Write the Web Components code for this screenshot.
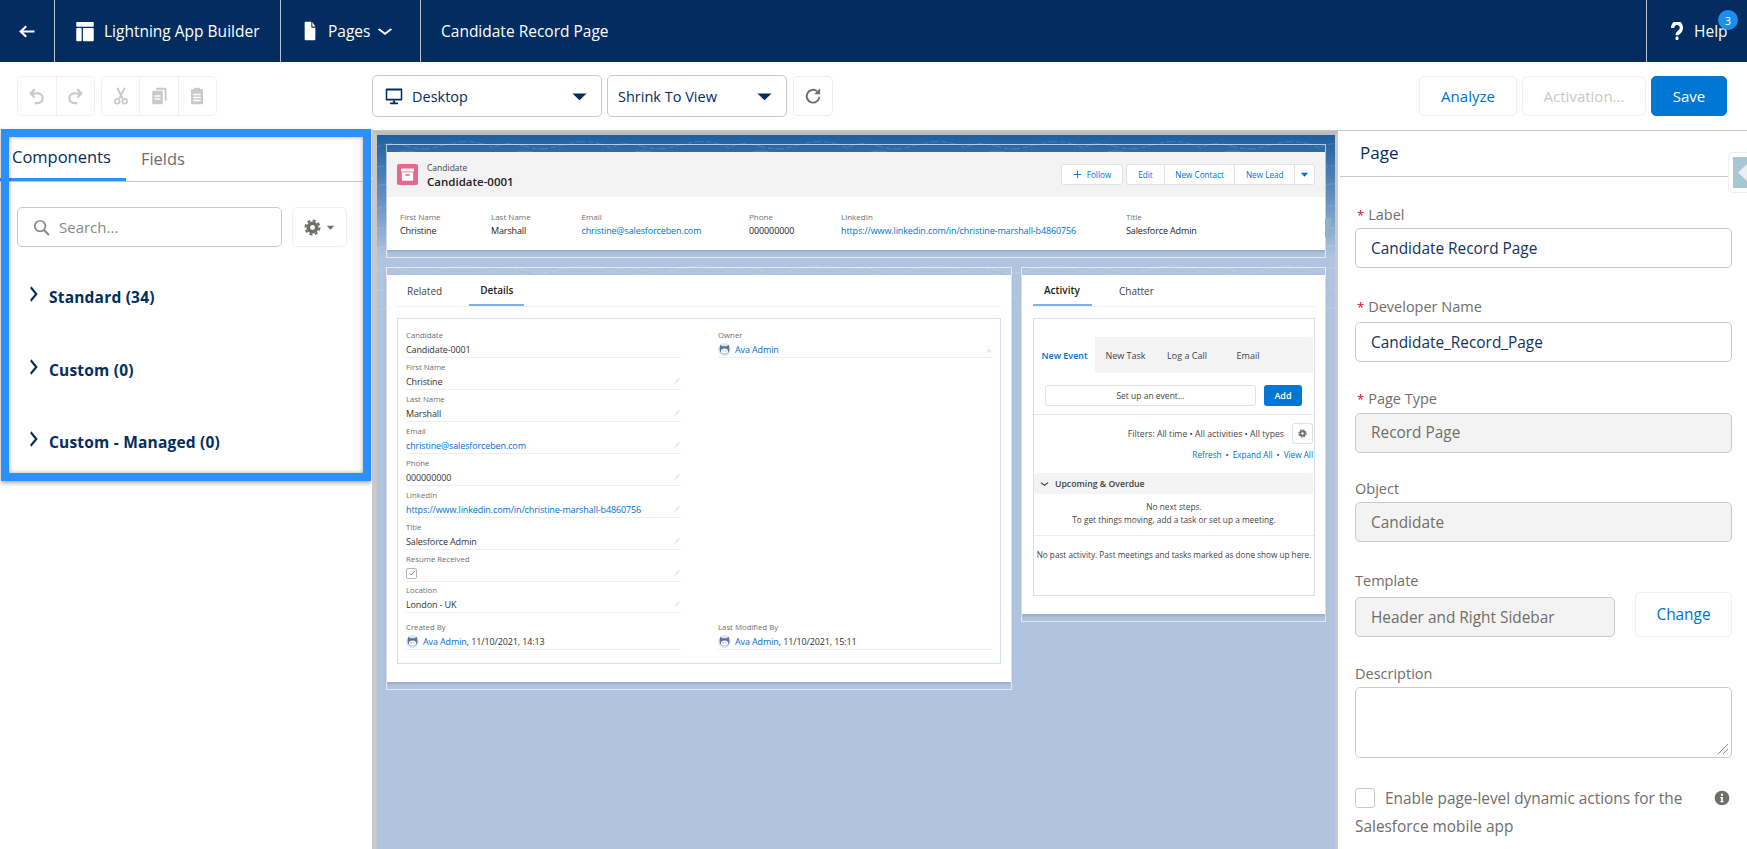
<!DOCTYPE html>
<html lang="en">
<head>
<meta charset="utf-8">
<title>Lightning App Builder</title>
<style>
  html, body { margin: 0; height: 849px; overflow: hidden; background: #fff; }
  body { font-family: "Open Sans", "Noto Sans", "Liberation Sans", sans-serif; display: flex; flex-direction: column; }
</style>
</head>
<body>
<sf-topbar></sf-topbar>
<sf-toolbar></sf-toolbar>
<sf-workspace>
  <sf-palette slot="left"></sf-palette>
  <sf-canvas slot="center">
    <sf-highlights></sf-highlights>
    <sf-details slot="main"></sf-details>
    <sf-activity slot="side"></sf-activity>
  </sf-canvas>
  <sf-props slot="right"></sf-props>
</sf-workspace>

<script>
"use strict";
const ICONS = {
  back: '<path d="M22 12H4M11 4.500L3.500 12l7.500 7.500" fill="none" stroke="currentColor" stroke-width="2.800"/>',
  layout: '<rect x="1.500" y="1" width="21" height="5.500" rx="1"/><rect x="1.500" y="8" width="6.500" height="15" rx="1"/><rect x="9.500" y="8" width="13" height="15" rx="1"/>',
  file: '<path fill-rule="evenodd" d="M5 1h9v6a1 1 0 0 0 1 1h5v14a1 1 0 0 1-1 1H5a1 1 0 0 1-1-1V2a1 1 0 0 1 1-1zM15.500 1.200L20 6.500h-4.500z"/>',
  chevdown: '<path d="M2.500 6.500l9.500 10.500 9.500-10.500" fill="none" stroke="currentColor" stroke-width="3.400"/>',
  chevright: '<path d="M6 2l12 10L6 22" fill="none" stroke="currentColor" stroke-width="4"/>',
  help: '<path d="M4.500 8a7.500 6.500 0 1 1 11.500 5.200c-2.200 1.500-4 2.200-4 4.300" fill="none" stroke="currentColor" stroke-width="5.600"/><circle cx="12" cy="21.600" r="2.600"/>',
  monitor: '<path fill-rule="evenodd" d="M2 2h20a1 1 0 0 1 1 1v14a1 1 0 0 1-1 1H2a1 1 0 0 1-1-1V3a1 1 0 0 1 1-1zm1 2.500V15.500h18V4.500z"/><rect x="10.500" y="18" width="3" height="3"/><rect x="6.500" y="20.500" width="11" height="2.500" rx="1"/>',
  undo: '<path d="M9 3L3.500 8.500 9 14M4 8.500h9a6.500 6.500 0 0 1 0 13H9" fill="none" stroke="currentColor" stroke-width="2.800"/>',
  redo: '<path d="M15 3l5.500 5.500L15 14M20 8.500h-9a6.500 6.500 0 0 0 0 13h4" fill="none" stroke="currentColor" stroke-width="2.800"/>',
  cut: '<path d="M7 1l7.500 15M17 1L9.500 16" fill="none" stroke="currentColor" stroke-width="2.400"/><circle cx="7" cy="19" r="3.200" fill="none" stroke="currentColor" stroke-width="2.200"/><circle cx="17" cy="19" r="3.200" fill="none" stroke="currentColor" stroke-width="2.200"/>',
  copy: '<path d="M8 1h13a1 1 0 0 1 1 1v16h-2.500V3.500H8z"/><path fill-rule="evenodd" d="M4 5h12a1 1 0 0 1 1 1v16a1 1 0 0 1-1 1H4a1 1 0 0 1-1-1V6a1 1 0 0 1 1-1zm2 6v2h8v-2zm0 4v2h8v-2z"/>',
  clip: '<path fill-rule="evenodd" d="M9 1h6a1 1 0 0 1 1 1v1h3a1 1 0 0 1 1 1v18a1 1 0 0 1-1 1H5a1 1 0 0 1-1-1V4a1 1 0 0 1 1-1h3V2a1 1 0 0 1 1-1zM7 9v2h10V9zm0 4v2h10v-2zm0 4v2h10v-2z"/>',
  refresh: '<path d="M20.500 13a8.500 8.500 0 1 1-3-7.200" fill="none" stroke="currentColor" stroke-width="2.600"/><path d="M21.500 1.500v8h-8z"/>',
  caret: '<path d="M2 7h20L12 18z"/>',
  search: '<circle cx="10" cy="10" r="7.500" fill="none" stroke="currentColor" stroke-width="2.400"/><path d="M15.500 15.500L22.500 22.500" stroke="currentColor" stroke-width="2.800"/>',
  gear: '<circle cx="12" cy="12" r="9.800" fill="none" stroke="currentColor" stroke-width="3" stroke-dasharray="4.200 3.500"/><path fill-rule="evenodd" d="M12 3.500a8.500 8.500 0 1 1 0 17 8.500 8.500 0 0 1 0-17zm0 5a3.500 3.500 0 1 0 0 7 3.500 3.500 0 0 0 0-7z"/>',
  box: '<rect width="24" height="24" rx="2" fill="#e3698c"/><rect x="4.500" y="5" width="15" height="3.500" rx=".6" fill="#fff"/><path fill-rule="evenodd" d="M5.500 9.500h13V18a1 1 0 0 1-1 1h-11a1 1 0 0 1-1-1zm4 2.300v1.700h5v-1.700z" fill="#fff"/>',
  plus: '<path d="M12 2v20M2 12h20" stroke="currentColor" stroke-width="2.400"/>',
  pencil: '<path d="M3 21l3-7L17 3l4 4-11 11z"/>',
  lock: '<path d="M6 13h12v9H6z"/><path d="M9 13V7a4 4 0 0 1 8 0" fill="none" stroke="currentColor" stroke-width="2"/>',
  check: '<path d="M5 13l5 5L20 6" fill="none" stroke="currentColor" stroke-width="2.400"/>',
  info: '<path fill-rule="evenodd" d="M12 1a11 11 0 1 1 0 22 11 11 0 0 1 0-22zM10.500 5.500v3h3v-3zM9.500 10.500v2h1.200v4H9.500v2h5v-2h-1.200v-6z"/>',
  avatar: '<circle cx="12" cy="12" r="12" fill="#dfe6f0"/><path d="M4 3l4 3h8l4-3 1 9a9 9 0 0 1-18 0z" fill="#5b7396"/><ellipse cx="12" cy="15" rx="6.500" ry="5" fill="#fff"/><circle cx="9.500" cy="14.500" r="1" fill="#5b7396"/><circle cx="14.500" cy="14.500" r="1" fill="#5b7396"/>'
};

class SfIcon extends HTMLElement {
  connectedCallback() {
    const w = this.getAttribute("w") || this.getAttribute("size") || 16;
    const h = this.getAttribute("h") || this.getAttribute("size") || 16;
    this.attachShadow({ mode: "open" }).innerHTML = `
      <style>:host { display: inline-flex; flex: none; } svg { display: block; fill: currentColor; }</style>
      <svg width="${w}" height="${h}" viewBox="0 0 24 24" preserveAspectRatio="none">${ICONS[this.getAttribute("name")]}</svg>`;
  }
}
customElements.define("sf-icon", SfIcon);

class SfTopbar extends HTMLElement {
  constructor() {
    super();
    this.attachShadow({ mode: "open" }).innerHTML = `
    <style>
      :host { display: flex; flex: none; height: 62px; background: #032d60; color: #fff; font-size: 15.500px; }
      .cell { display: flex; align-items: center; border-right: 1px solid #b9c2d0; box-sizing: border-box; }
      .back { width: 55px; padding-left: 18px; }
      .app { width: 226px; padding-left: 20px; gap: 9px; }
      .pages { width: 140px; padding-left: 21px; gap: 10px; }
      .pages sf-icon:last-child { margin-left: -3px; }
      .name { flex: 1; padding-left: 20px; border-right: 0; }
      .help { width: 101px; padding-left: 23px; gap: 10px; border-right: 0; border-left: 1px solid #b9c2d0; position: relative; }
      .badge { position: absolute; left: 71px; top: 10px; width: 20px; height: 20px; border-radius: 50%; background: #1b8ff0; font-size: 11px; display: flex; align-items: center; justify-content: center; }
    </style>
    <div class="cell back"><sf-icon name="back" w="18" h="17"></sf-icon></div>
    <div class="cell app"><sf-icon name="layout" w="20" h="21"></sf-icon><span>Lightning App Builder</span></div>
    <div class="cell pages"><sf-icon name="file" w="16" h="20"></sf-icon><span>Pages</span><sf-icon name="chevdown" w="16" h="11"></sf-icon></div>
    <div class="cell name">Candidate Record Page</div>
    <div class="cell help"><sf-icon name="help" w="14" h="18"></sf-icon><span>Help</span><span class="badge">3</span></div>`;
  }
}
customElements.define("sf-topbar", SfTopbar);

class SfToolbar extends HTMLElement {
  constructor() {
    super();
    this.attachShadow({ mode: "open" }).innerHTML = `
    <style>
      :host { display: flex; flex: none; height: 68px; align-items: center; box-sizing: border-box; padding: 0 20px 0 17px; font-size: 14.500px; color: #032d60; }
      .grp { display: flex; height: 40px; border: 1px solid #f0f0f0; border-radius: 5px; box-sizing: border-box; color: #c9c9c9; }
      .grp span { flex: 1; display: flex; align-items: center; justify-content: center; }
      .grp span + span { border-left: 1px solid #f0f0f0; }
      .g1 { width: 78px; margin-right: 6px; }
      .g2 { width: 116px; margin-right: 155px; }
      .dd { display: flex; align-items: center; height: 42px; box-sizing: border-box; border: 1px solid #c9c9c9; border-radius: 5px; margin-right: 6px; padding: 0 13px 0 12px; }
      .dd span { flex: 1; }
      .d1 { width: 230px; margin-right: 5px; }
      .d1 span { margin-left: 9px; }
      .d2 { width: 180px; padding-left: 10px; }
      .icon { width: 40px; height: 40px; box-sizing: border-box; border: 1px solid #ececec; border-radius: 5px; display: flex; align-items: center; justify-content: center; color: #706e6b; }
      .sp { flex: 1; }
      .btn { height: 40px; box-sizing: border-box; display: flex; align-items: center; justify-content: center; border: 1px solid #f0f0f0; border-radius: 5px; color: #0070d2; margin-left: 5px; }
      .an { width: 98px; font-size: 15px; }
      .ac { width: 124px; color: #c9c7c5; font-size: 15px; }
      .sv { width: 76px; background: #0176d3; border-color: #0176d3; color: #fff; font-size: 15px; }
    </style>
    <div class="grp g1"><span><sf-icon name="undo" size="18"></sf-icon></span><span><sf-icon name="redo" size="18"></sf-icon></span></div>
    <div class="grp g2"><span><sf-icon name="cut" size="18"></sf-icon></span><span><sf-icon name="copy" size="18"></sf-icon></span><span><sf-icon name="clip" size="18"></sf-icon></span></div>
    <div class="dd d1"><sf-icon name="monitor" size="18"></sf-icon><span>Desktop</span><sf-icon name="caret" w="17" h="15"></sf-icon></div>
    <div class="dd d2"><span>Shrink To View</span><sf-icon name="caret" w="17" h="15"></sf-icon></div>
    <div class="icon"><sf-icon name="refresh" size="18"></sf-icon></div>
    <div class="sp"></div>
    <div class="btn an">Analyze</div>
    <div class="btn ac">Activation...</div>
    <div class="btn sv">Save</div>`;
  }
}
customElements.define("sf-toolbar", SfToolbar);

class SfWorkspace extends HTMLElement {
  constructor() {
    super();
    this.attachShadow({ mode: "open" }).innerHTML = `
    <style>
      :host { display: flex; flex: 1; min-height: 0; border-top: 1px solid #c9c9c9; }
    </style>
    <slot name="left"></slot><slot name="center"></slot><slot name="right"></slot>`;
  }
}
customElements.define("sf-workspace", SfWorkspace);

class SfPalette extends HTMLElement {
  constructor() {
    super();
    this.attachShadow({ mode: "open" }).innerHTML = `
    <style>
      :host { display: block; flex: none; width: 372px; position: relative; color: #032d60; }
      .tabs { display: flex; height: 50px; border-bottom: 1px solid #c9c9c9; font-size: 16.500px; }
      .tab { display: flex; align-items: center; padding: 4px 15px 0 12px; height: 50px; box-sizing: border-box; margin-bottom: -1px; }
      .on { border-bottom: 3px solid #2b91f9; }
      .off { color: #706e6b; margin-left: 3px; }
      .search { display: flex; margin: 25px 0 14px 17px; }
      .box { width: 265px; height: 40px; box-sizing: border-box; border: 1px solid #c9c9c9; border-radius: 5px; display: flex; align-items: center; gap: 9px; padding-left: 15px; color: #8a8886; font-size: 15px; }
      .gear { width: 55px; height: 40px; box-sizing: border-box; margin-left: 10px; border: 1px solid #f0f0f0; border-radius: 5px; display: flex; align-items: center; justify-content: center; gap: 5px; color: #706e6b; }
      .sec { display: flex; align-items: center; gap: 10px; height: 72.500px; padding-left: 28px; font-weight: 700; font-size: 15.500px; letter-spacing: .2px; }
      .sec sf-icon { margin-top: -6px; }
      .mark { position: absolute; left: 1px; top: -2px; width: 370px; height: 352px; box-sizing: border-box; border: 8px solid #2b91f9; pointer-events: none; box-shadow: 0 2px 4px rgba(0,0,0,.35), inset 0 0 4px rgba(0,0,0,.35); }
    </style>
    <div class="tabs"><div class="tab on">Components</div><div class="tab off">Fields</div></div>
    <div class="search">
      <div class="box"><sf-icon name="search" size="17"></sf-icon><span>Search...</span></div>
      <div class="gear"><sf-icon name="gear" size="17"></sf-icon><sf-icon name="caret" w="9" h="9"></sf-icon></div>
    </div>
    <div class="sec"><sf-icon name="chevright" w="11" h="16"></sf-icon><span>Standard (34)</span></div>
    <div class="sec"><sf-icon name="chevright" w="11" h="16"></sf-icon><span>Custom (0)</span></div>
    <div class="sec"><sf-icon name="chevright" w="11" h="16"></sf-icon><span>Custom - Managed (0)</span></div>
    <div class="mark"></div>`;
  }
}
customElements.define("sf-palette", SfPalette);

class SfCanvas extends HTMLElement {
  constructor() {
    super();
    this.attachShadow({ mode: "open" }).innerHTML = `
    <style>
      :host { display: block; flex: 1; min-width: 0; position: relative; overflow: hidden; box-sizing: border-box; border-left: 5px solid #c9c9c9; border-right: 3px solid #c9c9c9; border-top: 4px solid #bdbdbd; padding: 9px 9px 0; background: linear-gradient(#1c5f9f 0, #6f95c6 70px, #b0c4df 122px); }
      .topo { position: absolute; left: 0; top: 0; width: 100%; height: 175px; }
      .row { position: relative; display: flex; gap: 9px; margin-top: 9px; align-items: flex-start; }
      .zone { position: relative; display: block; }
      ::slotted(sf-details) { width: 626px; }
      ::slotted(sf-activity) { width: 305px; }
    </style>
    <svg class="topo" aria-hidden="true">
      <defs><pattern id="p" width="118" height="62" patternUnits="userSpaceOnUse">
        <g fill="none" stroke="#fff" stroke-opacity=".2" stroke-width=".8">
          <path d="M0 12c20-10 34 6 55 1s38-12 63 1" stroke-dasharray="5 2 9 3"/>
          <path d="M0 32c26-6 40 14 66 4s32-10 52-3" stroke-dasharray="7 2"/>
          <path d="M0 52c16-9 42 5 58-3s40-5 60 3"/>
          <ellipse cx="30" cy="22" rx="14" ry="6"/><ellipse cx="88" cy="44" rx="17" ry="7" stroke-dasharray="3 2"/><ellipse cx="88" cy="44" rx="8" ry="3"/>
        </g></pattern></defs>
      <rect width="100%" height="100%" fill="url(#p)"/>
    </svg>
    <div class="zone"><slot></slot></div>
    <div class="row"><slot name="main"></slot><slot name="side"></slot></div>`;
  }
}
customElements.define("sf-canvas", SfCanvas);

const ZONE = `border: 1px solid rgba(255,255,255,.65); padding: 7px 0; box-sizing: border-box;`;
const TAB_CSS = `
  .tabs { display: flex; gap: 16px; height: 31px; border-bottom: 1px solid #f3f3f3; font-size: 10px; color: #444; }
  .tab { display: flex; align-items: center; padding: 0 11px; box-sizing: border-box; height: 31px; margin-bottom: -1px; }
  .on { font-weight: 600; color: #222; border-bottom: 2px solid #7fb0ec; }`;

class SfHighlights extends HTMLElement {
  constructor() {
    super();
    this.attachShadow({ mode: "open" }).innerHTML = `
    <style>
      :host { display: block; position: relative; ${ZONE} color: #222; }
      .card { box-shadow: 0 1px 2px rgba(0,0,0,.15); }
      .head { height: 45px; background: #f3f3f3; display: flex; align-items: center; padding: 0 10px; box-sizing: border-box; gap: 9px; }
      .ttl { flex: 1; line-height: 13px; }
      .ttl small { display: block; font-size: 8.500px; color: #444; }
      .ttl b { font-size: 11.500px; font-weight: 600; }
      .b { height: 21px; background: #fff; border: 1px solid #e1e1e1; border-radius: 3px; box-sizing: border-box; display: flex; font-size: 8.200px; color: #0070d2; align-items: center; }
      .b > span { display: flex; align-items: center; justify-content: center; height: 100%; box-sizing: border-box; }
      .b > span + span { border-left: 1px solid #e1e1e1; }
      .follow { width: 62px; gap: 5px; justify-content: center; margin-right: -6px; }
      .grp { width: 189px; }
      .body { height: 53px; background: #fff; display: flex; align-items: flex-start; padding-top: 13px; box-sizing: border-box; padding-left: 13px; font-size: 9px; letter-spacing: -.12px; }
      .f { line-height: 14px; }
      .f small { display: block; font-size: 8px; color: #706e6b; letter-spacing: 0; }
      a { color: #0070d2; text-decoration: none; }
      .handle { position: absolute; right: -6px; top: 73px; width: 6px; height: 20px; background: #8fb0c8; border-radius: 2px 0 0 2px; }
    </style>
    <div class="card">
      <div class="head">
        <sf-icon name="box" size="21"></sf-icon>
        <div class="ttl"><small>Candidate</small><b>Candidate-0001</b></div>
        <div class="b follow"><sf-icon name="plus" size="9"></sf-icon>Follow</div>
        <div class="b grp"><span style="width:37px">Edit</span><span style="width:71px">New Contact</span><span style="width:60px">New Lead</span><span style="width:20px"><sf-icon name="caret" size="9"></sf-icon></span></div>
      </div>
      <div class="body">
        <div class="f" style="width:91px"><small>First Name</small>Christine</div>
        <div class="f" style="width:90.500px"><small>Last Name</small>Marshall</div>
        <div class="f" style="width:167.500px"><small>Email</small><a>christine@salesforceben.com</a></div>
        <div class="f" style="width:92px"><small>Phone</small>000000000</div>
        <div class="f" style="width:285px"><small>LinkedIn</small><a>https://www.linkedin.com/in/christine-marshall-b4860756</a></div>
        <div class="f"><small>Title</small>Salesforce Admin</div>
      </div>
    </div>
    <div class="handle"></div>`;
  }
}
customElements.define("sf-highlights", SfHighlights);

class SfField extends HTMLElement {
  connectedCallback() {
    const end = this.getAttribute("end");
    this.attachShadow({ mode: "open" }).innerHTML = `
    <style>
      :host { display: block; height: 32px; font-size: 9px; letter-spacing: -.12px; color: #333; }
      .l { height: 12px; line-height: 12px; font-size: 7.800px; color: #706e6b; letter-spacing: 0; }
      .v { height: 17px; box-sizing: border-box; display: flex; align-items: center; border-bottom: 1px solid #eeeeee; gap: 4px; }
      .v span { flex: 1; display: flex; align-items: center; white-space: pre; }
      sf-icon { color: #e8e8e8; }
    </style>
    <div class="l">${this.getAttribute("label")}</div>
    <div class="v"><span><slot></slot></span>${end ? `<sf-icon name="${end}" size="8"></sf-icon>` : ""}</div>`;
  }
}
customElements.define("sf-field", SfField);

class SfDetails extends HTMLElement {
  constructor() {
    super();
    this.attachShadow({ mode: "open" }).innerHTML = `
    <style>
      :host { display: block; ${ZONE} }
      .card { background: #fff; padding: 0 10px 19px 10px; box-shadow: 0 2px 3px rgba(0,0,0,.12); height: 407px; box-sizing: border-box; }
      ${TAB_CSS}
      .tabs { margin-left: -1px; }
      .box { margin-top: 11px; height: 346px; box-sizing: border-box; border: 1px solid #d5dfec; padding: 10px 8px; display: grid; grid-template-columns: 275px 275px; column-gap: 37px; grid-template-rows: repeat(7, 32px) 31px 32px 32px; }
      .foot { margin-top: 5px; }
      .c2 { grid-column: 2; grid-row: 1; }
      .chk { display: inline-flex; width: 9px; height: 9px; border: 1px solid #b5b5b5; border-radius: 2px; align-items: center; justify-content: center; }
      .who { margin-right: 4px; }
      a { color: #0070d2; }
    </style>
    <div class="card">
      <div class="tabs"><div class="tab">Related</div><div class="tab on">Details</div></div>
      <div class="box">
        <sf-field label="Candidate" style="grid-row:1">Candidate-0001</sf-field>
        <sf-field label="Owner" end="lock" class="c2"><sf-icon class="who" name="avatar" size="13"></sf-icon><a>Ava Admin</a></sf-field>
        <sf-field label="First Name" end="pencil" style="grid-row:2">Christine</sf-field>
        <sf-field label="Last Name" end="pencil" style="grid-row:3">Marshall</sf-field>
        <sf-field label="Email" end="pencil" style="grid-row:4"><a>christine@salesforceben.com</a></sf-field>
        <sf-field label="Phone" end="pencil" style="grid-row:5">000000000</sf-field>
        <sf-field label="LinkedIn" end="pencil" style="grid-row:6"><a>https://www.linkedin.com/in/christine-marshall-b4860756</a></sf-field>
        <sf-field label="Title" end="pencil" style="grid-row:7">Salesforce Admin</sf-field>
        <sf-field label="Resume Received" end="pencil" style="grid-row:8"><span class="chk"><sf-icon name="check" size="8" style="color:#706e6b"></sf-icon></span></sf-field>
        <sf-field label="Location" end="pencil" style="grid-row:9">London - UK</sf-field>
        <sf-field label="Created By" class="foot" style="grid-row:10"><sf-icon class="who" name="avatar" size="13"></sf-icon><a>Ava Admin</a>, 11/10/2021, 14:13</sf-field>
        <sf-field label="Last Modified By" class="foot" style="grid-row:10;grid-column:2"><sf-icon class="who" name="avatar" size="13"></sf-icon><a>Ava Admin</a>, 11/10/2021, 15:11</sf-field>
      </div>
    </div>`;
  }
}
customElements.define("sf-details", SfDetails);

class SfActivity extends HTMLElement {
  constructor() {
    super();
    this.attachShadow({ mode: "open" }).innerHTML = `
    <style>
      :host { display: block; ${ZONE} }
      .card { background: #fff; padding: 0 10px 0 11px; height: 339px; box-sizing: border-box; box-shadow: 0 2px 3px rgba(0,0,0,.12); font-size: 9px; color: #444; }
      ${TAB_CSS}
      .box { margin-top: 11px; height: 278px; box-sizing: border-box; border: 1px solid #d5dfec; padding-top: 18px; }
      .pub { display: flex; height: 36px; background: #f3f3f3; border-radius: 3px 3px 0 0; align-items: center; margin-right: 1px; }
      .pub span { text-align: center; }
      .pub .act { align-self: stretch; display: flex; align-items: center; justify-content: center; background: #fff; color: #0070d2; font-weight: 600; width: 61px; }
      .comp { display: flex; height: 42px; border-bottom: 1px solid #e5e5e5; padding: 12px 11px 0; box-sizing: border-box; gap: 8px; margin-right: 1px; }
      .inp { width: 211px; height: 21px; box-sizing: border-box; border: 1px solid #e1e1e1; border-radius: 3px; display: flex; align-items: center; justify-content: center; font-size: 8.500px; }
      .add { width: 38px; height: 21px; background: #0176d3; color: #fff; border-radius: 3px; display: flex; align-items: center; justify-content: center; font-weight: 600; }
      .flt { display: flex; justify-content: flex-end; align-items: center; height: 29px; margin-top: 4px; gap: 8px; padding-right: 1px; font-size: 8.700px; }
      .gb { width: 21px; height: 21px; box-sizing: border-box; border: 1px solid #e1e1e1; border-radius: 3px; display: flex; align-items: center; justify-content: center; color: #706e6b; }
      .lnk { display: flex; justify-content: flex-end; gap: 4px; height: 14px; line-height: 14px; font-size: 8.200px; margin-bottom: 11px; padding-right: 1px; color: #0070d2; }
      .lnk i { color: #444; font-style: normal; }
      .up { height: 21px; background: #f3f3f3; display: flex; align-items: center; gap: 6px; padding-left: 6px; font-weight: 600; font-size: 8.700px; margin-right: 1px; border-radius: 3px; }
      .none { text-align: center; line-height: 13px; padding: 6px 0 9px; border-bottom: 1px solid #ececec; font-size: 8.300px; }
      .past { text-align: center; margin-top: 13px; font-size: 8.200px; white-space: nowrap; }
    </style>
    <div class="card">
      <div class="tabs"><div class="tab on" style="width:59px">Activity</div><div class="tab">Chatter</div></div>
      <div class="box">
        <div class="pub"><span class="act">New Event</span><span style="width:61px">New Task</span><span style="width:62px">Log a Call</span><span style="width:60px">Email</span></div>
        <div class="comp"><div class="inp">Set up an event...</div><div class="add">Add</div></div>
        <div class="flt"><span>Filters: All time • All activities • All types</span><div class="gb"><sf-icon name="gear" size="9"></sf-icon></div></div>
        <div class="lnk"><span>Refresh</span><i>•</i><span>Expand All</span><i>•</i><span>View All</span></div>
        <div class="up"><sf-icon name="chevdown" w="9" h="6"></sf-icon><span>Upcoming &amp; Overdue</span></div>
        <div class="none">No next steps.<br>To get things moving, add a task or set up a meeting.</div>
        <div class="past">No past activity. Past meetings and tasks marked as done show up here.</div>
      </div>
    </div>`;
  }
}
customElements.define("sf-activity", SfActivity);

class SfProp extends HTMLElement {
  connectedCallback() {
    const req = this.hasAttribute("required");
    const dis = this.hasAttribute("disabled");
    const gap = this.getAttribute("gap") || 4;
    const h = this.getAttribute("h") || 40;
    this.attachShadow({ mode: "open" }).innerHTML = `
    <style>
      :host { display: block; font-size: 15.400px; }
      .l { height: 20px; line-height: 20px; font-size: 14.500px; color: #706e6b; margin-bottom: ${gap}px; white-space: nowrap; }
      .l i { color: #ea001e; font-style: normal; margin: 0 4px 0 2px; font-size: 13px; }
      .i { height: ${h}px; box-sizing: border-box; border: 1px solid #c9c9c9; border-radius: 5px; padding: 0 15px; display: flex; align-items: center; color: ${dis ? "#706e6b" : "#16325c"}; background: ${dis ? "#f3f3f3" : "#fff"}; position: relative; white-space: nowrap; }
    </style>
    <div class="l">${req ? "<i>*</i>" : ""}${this.getAttribute("label")}</div>
    <div class="i"><slot></slot></div>`;
  }
}
customElements.define("sf-prop", SfProp);

class SfProps extends HTMLElement {
  constructor() {
    super();
    this.attachShadow({ mode: "open" }).innerHTML = `
    <style>
      :host { display: block; flex: none; width: 409px; position: relative; font-size: 15.400px; }
      .hd { height: 46px; box-sizing: border-box; margin-left: 2px; padding: 0 0 2px 20px; display: flex; align-items: center; border-bottom: 1px solid #c9c9c9; font-size: 17px; color: #032d60; }
      .form { padding: 28px 15px 0 17px; }
      .tpl { display: flex; align-items: flex-end; margin-top: 29px; gap: 20px; }
      .tpl sf-prop { width: 260px; }
      .chg { width: 97px; height: 45px; box-sizing: border-box; border: 1px solid #f0f0f0; border-radius: 5px; display: flex; align-items: center; justify-content: center; color: #0070d2; }
      .dyn { margin-top: 30px; color: #706e6b; position: relative; line-height: 27px; }
      .dyn-row { display: flex; align-items: center; height: 20px; }
      .cb { width: 20px; height: 20px; box-sizing: border-box; border: 1px solid #c9c9c9; border-radius: 3px; margin-right: 10px; }
      .dyn-row span { flex: 1; white-space: nowrap; }
      .dyn-row sf-icon { margin-right: 2px; color: #706e6b; }
      .mob { margin-top: 5px; }
      .handle { position: absolute; right: 0; top: 21px; width: 19px; height: 41px; box-sizing: border-box; background: #fff; border: 1px solid #eee; border-right: 0; border-radius: 5px 0 0 5px; padding: 4px 0 4px 4px; }
      .handle svg { display: block; }
    </style>
    <div class="hd">Page</div>
    <div class="handle"><svg width="14" height="31"><rect width="14" height="31" fill="#a8c6d4"/><path d="M14 7v17L5 15.500z" fill="#e8eef2"/></svg></div>
    <div class="form">
      <sf-prop label="Label" required gap="3">Candidate Record Page</sf-prop>
      <sf-prop label="Developer Name" required gap="5" style="margin-top:29px">Candidate_Record_Page</sf-prop>
      <sf-prop label="Page Type" required gap="3.500" disabled style="margin-top:27px">Record Page</sf-prop>
      <sf-prop label="Object" gap="3" disabled style="margin-top:26.500px">Candidate</sf-prop>
      <div class="tpl"><sf-prop label="Template" gap="6" disabled>Header and Right Sidebar</sf-prop><div class="chg">Change</div></div>
      <sf-prop label="Description" gap="3" h="71" style="margin-top:27px"><svg width="12" height="12" style="position:absolute;right:2px;bottom:2px"><path d="M1 11L11 1M6 11l5-5" stroke="#888" fill="none"/></svg></sf-prop>
      <div class="dyn">
        <div class="dyn-row"><div class="cb"></div><span>Enable page-level dynamic actions for the</span><sf-icon name="info" size="16"></sf-icon></div>
        <div class="mob">Salesforce mobile app</div>
      </div>
    </div>`;
  }
}
customElements.define("sf-props", SfProps);
</script>
</body>
</html>
